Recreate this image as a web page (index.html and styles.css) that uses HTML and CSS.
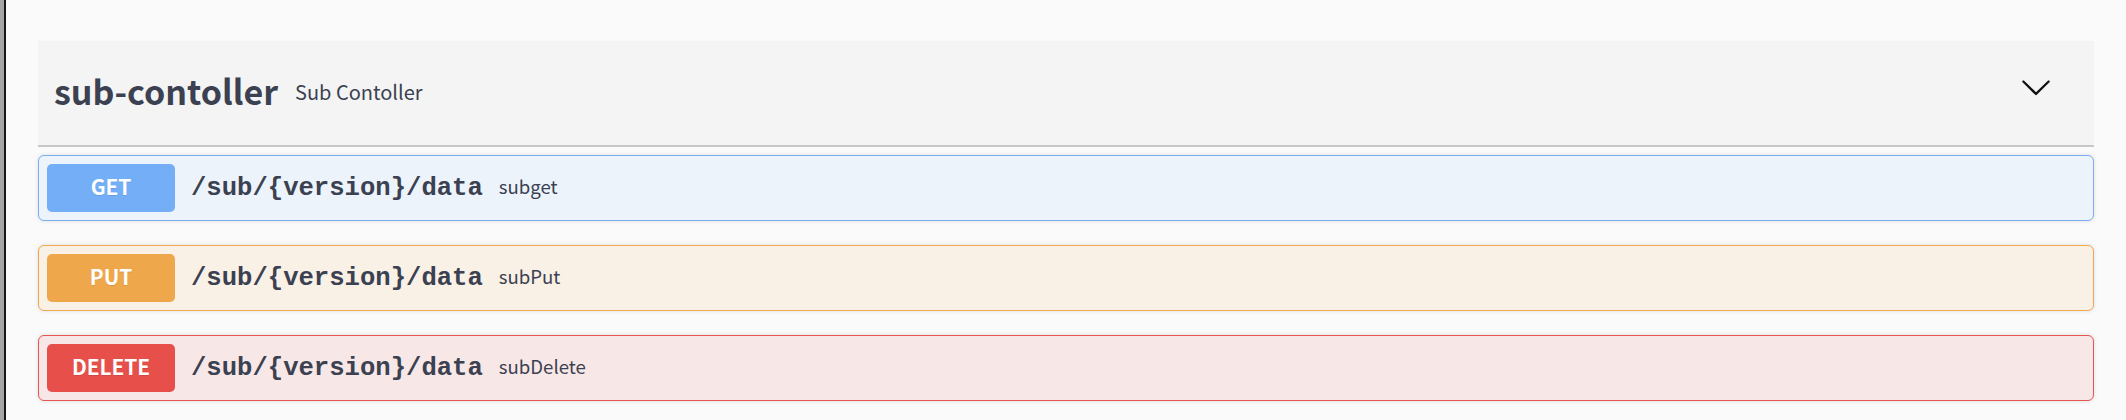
FILE: index.html
```html
<!DOCTYPE html>
<html lang="en">
<head>
<meta charset="utf-8">
<title>sub-contoller</title>
<link rel="stylesheet" href="styles.css">
</head>
<body>
<div class="frame">
  <div class="wrapper">
    <section class="tag-section">
      <div class="tag-header">
        <h4 class="tag-title">sub-contoller</h4>
        <small class="tag-desc">Sub Contoller</small>
        <button class="expand" aria-label="collapse">
          <svg viewBox="0 0 20 20" width="32" height="32"><path d="M17.418 6.109c.272-.268.709-.268.979 0s.271.701 0 .969l-7.908 7.830c-.27.268-.707.268-.979 0l-7.908-7.830c-.27-.268-.27-.701 0-.969.271-.268.709-.268.979 0L10 13.25l7.418-7.141z" fill="#111"/></svg>
        </button>
      </div>
      <div class="opblock get">
        <span class="method">GET</span>
        <span class="path">/sub/{version}/data</span>
        <span class="summary">subget</span>
      </div>
      <div class="opblock put">
        <span class="method">PUT</span>
        <span class="path">/sub/{version}/data</span>
        <span class="summary">subPut</span>
      </div>
      <div class="opblock delete">
        <span class="method">DELETE</span>
        <span class="path">/sub/{version}/data</span>
        <span class="summary">subDelete</span>
      </div>
    </section>
  </div>
</div>
</body>
</html>
```

FILE: styles.css
```css
html, body {
  margin: 0;
  padding: 0;
  height: 100%;
}
body {
  background: #fafafa;
  border-left: 4px solid #a5a5a5;
  box-sizing: border-box;
  font-family: "Noto Sans CJK KR", "Noto Sans", sans-serif;
  color: #3b4151;
}
.frame {
  border-left: 2px solid #161616;
  min-height: 100%;
  box-sizing: border-box;
}
.wrapper {
  padding: 41px 32px 0 32px;
}
.tag-header {
  display: flex;
  align-items: center;
  height: 104px;
  background: #f4f4f4;
  border-bottom: 2px solid #c6c7c9;
  padding: 0 42px 0 16px;
  margin-bottom: 8px;
}
.tag-title {
  margin: 0;
  font-size: 34px;
  font-weight: 700;
  line-height: 1;
  color: #3b4151;
  position: relative;
  top: -2px;
}
.tag-desc {
  font-size: 20px;
  padding: 0 17px;
  line-height: 1;
  color: #3b4151;
  flex: 1;
  position: relative;
  top: -1px;
}
.expand {
  border: none;
  background: none;
  padding: 0;
  width: 32px;
  height: 32px;
  position: relative;
  top: -6px;
}
.expand svg { display: block; }
.opblock {
  display: flex;
  align-items: center;
  border: 1px solid;
  border-radius: 6px;
  padding: 8px;
  margin-bottom: 24px;
  box-shadow: 0 0 4px rgba(0,0,0,.12);
}
.method {
  min-width: 128px;
  height: 48px;
  box-sizing: border-box;
  padding-bottom: 4px;
  display: flex;
  align-items: center;
  justify-content: center;
  border-radius: 5px;
  color: #fff;
  font-size: 20.8px;
  font-weight: 700;
  text-shadow: 0 1px 0 rgba(0,0,0,.1);
}
.path {
  font-family: "Courier New", "Liberation Mono", monospace;
  font-weight: 700;
  font-size: 25.6px;
  padding: 0 16px;
  color: #3b4151;
}
.summary {
  font-size: 18.6px;
  color: #3b4151;
  position: relative;
  top: -3px;
}
.get { background: #ecf3fb; border-color: #79aff2; }
.get .method { background: #74aef7; }
.put { background: #f9f0e6; border-color: #f0a94f; }
.put .method { background: #eea74b; }
.delete { background: #f8e7e7; border-color: #e8544f; }
.delete .method { background: #e7504a; }
```
